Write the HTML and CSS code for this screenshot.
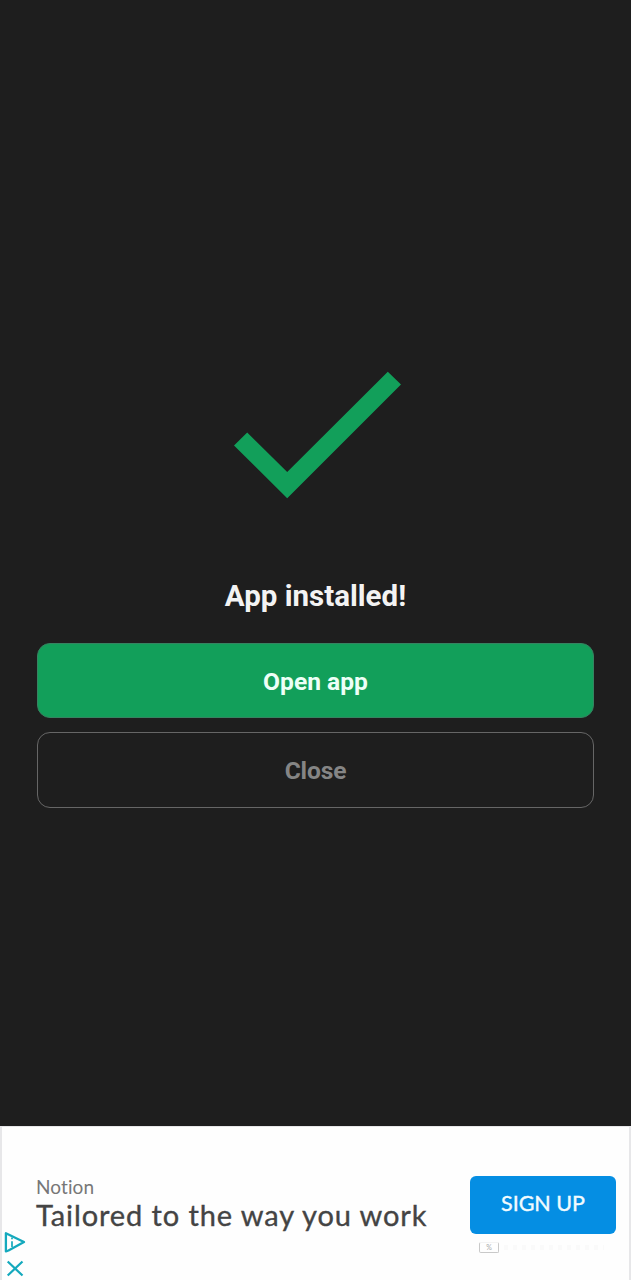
FILE: index.html
```html
<!DOCTYPE html>
<html lang="en">
<head>
<meta charset="utf-8">
<title>App installed</title>
<link rel="stylesheet" href="styles.css">
</head>
<body>
<main class="result">
  <svg class="check" width="168" height="128" viewBox="0 0 168 128" aria-hidden="true"><path d="M0 73.5 13.2 60.5 53.2 100 153.8 -.2 167 12.5 53.2 126.3Z"/></svg>
  <h1 class="title">App installed!</h1>
  <div class="actions">
    <button class="button primary">Open app</button>
    <button class="button secondary">Close</button>
  </div>
</main>
<aside class="ad">
  <div class="copy">
    <div class="brand">Notion</div>
    <div class="headline">Tailored to the way you work</div>
  </div>
  <button class="signup">SIGN UP</button>
  <svg class="choices" width="24" height="50" viewBox="0 0 24 50" fill="none" aria-hidden="true">
    <path d="M2.9 2.2V20.4L5.5 19.5 21 11 2.9 2.2Z" stroke-width="2.3" stroke-linejoin="round"/>
    <path d="M9 10.2V16M9 6.5V8.3" stroke-width="1.7"/>
    <path d="M4.7 30.5 19.5 44.5M19.5 30.5 4.7 44.5" stroke-width="2.2"/>
  </svg>
  <div class="badge">%</div>
  <div class="fineprint"></div>
</aside>
</body>
</html>
```
FILE: styles.css
```css
* { box-sizing: border-box; }
body { margin: 0; height: 1280px; display: flex; flex-direction: column; overflow: hidden; background: #1e1e1e; font-family: Roboto, sans-serif; }
button { margin: 0; padding: 0; font-family: inherit; }
.result { height: 1126px; padding: 371.5px 37px 0; display: flex; flex-direction: column; align-items: center; }
.check { display: block; overflow: visible; fill: #129f5a; margin-left: 4px; flex: none; }
.title { margin: 79.5px 0 0; height: 35px; line-height: 35px; font-size: 29.5px; font-weight: 700; color: #f3f3f3; white-space: nowrap; }
.actions { margin-top: 28.5px; width: 100%; display: flex; flex-direction: column; gap: 14px; }
.button { height: 75.5px; border: 1px solid #666; border-radius: 13px; font-size: 24.6px; font-weight: 700; padding-top: 2px; }
.primary { background: #129f5a; border-color: #368361; color: #edfff7; }
.secondary { background: transparent; color: #858585; padding-top: 1px; letter-spacing: -.15px; }
.ad { position: relative; height: 154px; display: flex; align-items: flex-start; justify-content: space-between; padding: 49px 13px 0 34px; background: #fefefe; border: 2px solid #e7e7e9; border-top-width: 1px; border-bottom: 0; font-family: Lato, sans-serif; }
.copy { margin-top: -1px; white-space: nowrap; }
.brand { height: 23px; line-height: 24px; font-size: 19px; letter-spacing: .1px; color: #777; }
.headline { height: 34px; line-height: 34px; font-size: 29px; letter-spacing: .9px; -webkit-text-stroke: .35px #444; color: #444; }
.signup { width: 146px; height: 58px; border: 0; border-radius: 6px; background: #058ee3; color: #f1fbff; font-size: 21.5px; -webkit-text-stroke: .4px #f1fbff; padding-bottom: 4px; }
.choices { position: absolute; left: 1px; top: 104px; stroke: #14a9bd; }
.badge { position: absolute; left: 477px; top: 115px; width: 20px; height: 11px; border: 1px solid #c9c9c9; border-top-color: #f3f3f3; border-radius: 2px; color: #aaa; font-size: 7px; line-height: 9px; text-align: center; }
.fineprint { position: absolute; left: 502px; top: 118px; width: 100px; height: 5px; background: repeating-linear-gradient(90deg, #fafafa 0 4px, #fefefe 4px 9px); }
```
